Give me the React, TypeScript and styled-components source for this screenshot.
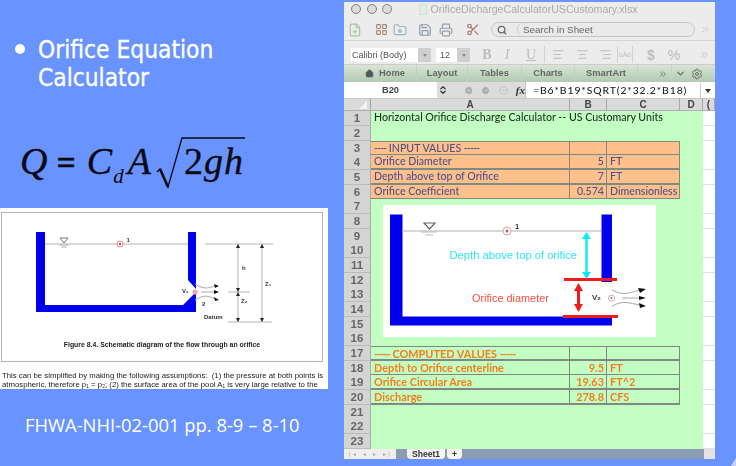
import React from "react";
import styled, { createGlobalStyle } from "styled-components";
import { FilePlus, LayoutGrid, FolderDown, Save, Printer, Scissors, Search, Home, Settings, ChevronDown, ChevronsRight, AlignLeft, AlignCenter, AlignRight, XCircle, CheckCircle, MinusCircle, ChevronsUpDown } from "lucide-react";

const Global = createGlobalStyle`
  html, body { margin: 0; padding: 0; background: #6994ff; }
  * { box-sizing: border-box; }
`;

const Slide = styled.div`
  width: 736px; height: 466px; background: #6994ff; display: flex; overflow: hidden; position: relative;
`;
const LeftColumn = styled.div`
  width: 344px; flex: none; display: flex; flex-direction: column; padding-top: 36px;
`;
const BulletRow = styled.div`
  display: flex; gap: 13px; padding-left: 15px; color: #fff; -webkit-text-stroke: 0.3px #fff;
  font: 400 24.3px/28px "DejaVu Sans Condensed", "DejaVu Sans", sans-serif;
`;
const Dot = styled.span`
  width: 10px; height: 10px; border-radius: 50%; background: #fff; flex: none; margin-top: 8px;
`;
const Equation = styled.div`
  height: 70px; margin-top: 37px; padding-left: 20px; display: flex; align-items: baseline;
  font: italic 38px/64px "Liberation Serif", serif; color: #0a0a12; -webkit-text-stroke: 0.35px #0a0a12;
`;
const EqSign = styled.span`
  font-style: normal; margin: 0 11px 0 9px; font-weight: 700; font-size: 34px;
`;
const EqSub = styled.span`
  font-size: 21px; margin: 0 4px 0 1px; transform: translateY(9px); -webkit-text-stroke: 0;
`;
const Radical = styled.span`
  position: relative; margin-left: 6px; padding-left: 27px; letter-spacing: 1px; display: inline-block;
`;
const RadicalMark = styled.svg`
  position: absolute; left: 0; top: 7px; overflow: visible;
`;
const RadicalDigit = styled.span`
  font-style: normal;
`;
const FigureCard = styled.div`
  width: 328px; height: 181px; margin-top: 9px; background: #fff; padding: 4px 5px 0 1px; filter: blur(0.45px); overflow: hidden; flex: none;
`;
const FigureFrame = styled.div`
  height: 150px; border: 1px solid #b4b4b4; display: flex; flex-direction: column;
`;
const FigureSvg = styled.svg`
  flex: none;
`;
const FigureCaption = styled.div`
  font: 700 6.9px/10px "Liberation Sans", sans-serif; color: #222; text-align: center; margin-top: -5px;
`;
const FigureText = styled.div`
  font: 400 7.78px/9px "Liberation Sans", sans-serif; color: #222; margin-top: 9px; padding-left: 1px; white-space: nowrap;
`;
const Footer = styled.div`
  margin: 25px 0 0 25px; color: #fff; font: 400 18.4px/22px "Open Sans", sans-serif; white-space: nowrap;
`;

const Window = styled.div`
  width: 371px; height: 457px; margin-top: 2px; background: #ececec; display: flex; flex-direction: column;
  overflow: hidden; filter: blur(0.45px); flex: none;
`;
const TitleBar = styled.div`
  height: 20px; display: flex; align-items: center; padding: 0 0 6px 7px; flex: none;
`;
const Light = styled.span`
  width: 10px; height: 10px; border-radius: 50%; border: 1.5px solid #808080; background: #dcdcdc; margin-right: 5.5px; flex: none;
`;
const DocIcon = styled.span`
  width: 8px; height: 11px; background: #dfeee2; border: 1px solid #cfe0d4; margin: 0 4px 0 21px; flex: none;
`;
const TitleText = styled.span`
  font: 400 10.6px/16px "Liberation Sans", sans-serif; color: #aaa; white-space: nowrap;
`;
const Toolbar = styled.div`
  height: 19px; display: flex; align-items: center; padding: 0 0 3px 4px; flex: none; border-bottom: 1px solid #d4d4d4;
`;
const ToolIcon = styled.span<{ $w: number; $c: string; $mr?: number }>`
  width: ${p => p.$w}px; margin-right: ${p => p.$mr ?? 0}px; display: flex; justify-content: center; color: ${p => p.$c}; flex: none;
`;
const SearchPill = styled.div`
  width: 204px; height: 15px; border: 1px solid #c4c4c4; border-radius: 8px; display: flex; align-items: center; padding-left: 5px; gap: 10px; color: #666; flex: none; background: #eaeaea; margin-right: 2px;
`;
const SearchText = styled.span`
  font: 400 9.8px/13px "Liberation Sans", sans-serif; color: #666; flex: 1; border-left: 1px solid #ccc; border-radius: 6px; padding-left: 5px;
`;
const FormatBar = styled.div`
  height: 24px; display: flex; align-items: center; padding: 4px 0 0 7px; flex: none; border-bottom: 1px solid #ccc;
`;
const FieldBox = styled.div<{ $w: number; $pl?: number }>`
  width: ${p => p.$w}px; height: 14px; background: #fff; font: 400 9px/14px "Liberation Sans", sans-serif; color: #555; padding-left: ${p => p.$pl ?? 1}px; flex: none; white-space: nowrap; overflow: hidden;
`;
const Stepper = styled.span<{ $mr?: number }>`
  width: 13px; height: 14px; background: #cfcfcf; margin-right: ${p => p.$mr ?? 0}px; flex: none; display: flex; align-items: center; justify-content: center;
  &::after { content: ""; border: 2.5px solid transparent; border-top: 3px solid #888; margin-top: 3px; }
`;
const FormatGlyph = styled.span<{ $w: number; $serif?: boolean; $it?: boolean; $bold?: boolean; $under?: boolean; $small?: boolean }>`
  width: ${p => p.$w}px; flex: none; color: #bcbcbc;
  font: ${p => (p.$it ? "italic " : "")}${p => (p.$bold ? "700 " : "400 ")}${p => (p.$small ? 7 : 14)}px/20px ${p => (p.$serif ? '"Liberation Serif", serif' : '"Liberation Sans", sans-serif')};
  text-decoration: ${p => (p.$under ? "underline" : "none")};
  display: flex; justify-content: center; align-items: center; height: 20px;
`;
const Separator = styled.span`
  width: 1px; height: 17px; background: #d2d2d2; flex: none;
`;
const Ribbon = styled.div`
  height: 17px; display: flex; align-items: center; flex: none; background: linear-gradient(#d9e5d6, #b2cab1);
`;
const RibbonTab = styled.div<{ $w: number; $pl?: number }>`
  width: ${p => p.$w}px; height: 17px; flex: none; border-right: 1px solid #c4d4c2; display: flex; align-items: center; justify-content: center; gap: 5px;
  padding-left: ${p => p.$pl ?? 0}px;
  font: 700 9.3px/17px "Liberation Sans", sans-serif; color: #5e6a60;
`;
const FormulaBar = styled.div`
  height: 16px; display: flex; flex: none; background: #dcdcdc; align-items: center;
`;
const NameBox = styled.div`
  width: 93px; height: 16px; background: #fff; text-align: center; font: 700 9.3px/16px "Liberation Sans", sans-serif; color: #444; flex: none;
`;
const FxZone = styled.div`
  width: 88px; flex: none; height: 16px; display: flex; align-items: center; color: #aaa; gap: 8px; padding-left: 1px;
`;
const FxStepper = styled.span`
  display: flex; color: #333; width: 10px; margin-right: 8px; flex: none;
`;
const FxLabel = styled.span`
  font: italic 700 11px/16px "Liberation Serif", serif; color: #333;
`;
const FormulaText = styled.div`
  width: 175px; height: 16px; background: #fff; flex: none; padding-left: 7px; font: 500 10.4px/16px "Lato", sans-serif; letter-spacing: 0.9px; color: #222; border-left: 1px solid #bbb; white-space: nowrap;
`;
const FormulaDrop = styled.div`
  flex: 1; height: 16px; background: #fff; border-left: 1px solid #ccc; display: flex; align-items: center; justify-content: center;
  &::after { content: ""; border: 3px solid transparent; border-top: 4px solid #333; margin-top: 4px; }
`;
const SheetRow = styled.div<{ $h: number }>`
  display: grid; grid-template-columns: 27px 199px 37px 73px 23px 1fr; height: ${p => p.$h}px; flex: none;
`;
const ColHead = styled.div`
  background: #dadada; border-right: 1px solid #a8a8a8; border-bottom: 1px solid #b0b0b0; border-top: 1px solid #c8c8c8; text-align: center;
  font: 700 10px/11px "Liberation Sans", sans-serif; color: #444; overflow: hidden;
`;
const Corner = styled(ColHead)`
  position: relative;
  &::after { content: ""; position: absolute; right: 3px; bottom: 1px; border-style: solid; border-width: 0 0 8px 8px; border-color: transparent transparent #f4f4f4 transparent; }
`;
const RowHead = styled.div`
  background: #d4d4d4; border-bottom: 1px solid #bbb; border-right: 1px solid #aaa; text-align: center;
  font: 700 11.5px/14px "Liberation Sans", sans-serif; color: #666;
`;
type CellKind = "plain" | "input" | "output";
const Cell = styled.div<{ $k: CellKind; $r?: boolean; $wide?: boolean }>`
  background: ${p => (p.$k === "input" ? "#ffc08b" : "#c3ffc3")};
  color: ${p => (p.$k === "input" ? "#50508c" : p.$k === "output" ? "#f57c1c" : "#1f3322")};
  font: ${p => (p.$k === "output" ? 700 : 500)} ${p => (p.$k === "output" ? 10.9 : 10.6)}px/13px "Lato", sans-serif;
  padding: 0 2px 0 3px; white-space: nowrap; overflow: hidden;
  text-align: ${p => (p.$r ? "right" : "left")};
  ${p => (p.$wide ? "grid-column: span 4;" : "")}
  ${p => (p.$k !== "plain" ? "border-right: 1px solid #808a80; border-bottom: 2px solid #808a80;" : "")}
`;
const TableTop = styled(Cell)`
  border-top: 1px solid #808a80;
`;
const Dashes = styled.span`
  letter-spacing: -0.9px;
`;
const EdgeCell = styled.div`
  background: #fff; border-bottom: 1px solid #e0e0e0;
`;
const SheetBody = styled.div`
  position: relative; flex: none;
`;
const SheetPicture = styled.svg`
  position: absolute; left: 39px; top: 107px; background: #fff;
`;
const TabBar = styled.div`
  flex: 1; display: flex; background: #8b9db2; align-items: stretch;
`;
const TabNav = styled.div`
  width: 52px; background: #eeeeee; font: 400 6px/10px "Liberation Sans", sans-serif; color: #aaa; letter-spacing: 2.6px; padding-left: 5px; white-space: nowrap; flex: none;
`;
const SheetTab = styled.div<{ $w: number; $ml: number }>`
  width: ${p => p.$w}px; margin-left: ${p => p.$ml}px; background: #f4f4f4; border-radius: 0 0 4px 4px; flex: none; text-align: center;
  font: 700 8.6px/10px "Liberation Sans", sans-serif; color: #333;
`;
const ResizeBox = styled.div`
  width: 12px; margin-left: auto; background: #e4e4e4; border-left: 1px solid #999;
`;
const CornerWedge = styled.svg`
  position: absolute; right: 0; bottom: 0;
`;

const tools: [number, React.ReactNode, string][] = [
  [12, <FilePlus size={14} />, "#a9c4a4"],
  [5, <LayoutGrid size={13} />, "#a08a70"],
  [11, <FolderDown size={14} />, "#9fb2c2"],
  [7, <Save size={14} />, "#8e9aa6"],
  [13, <Printer size={14} />, "#98a2aa"],
  [11, <Scissors size={15} />, "#b0706a"],
];

type Row = { n: number; a?: string; b?: string; c?: string; k?: CellKind; top?: boolean };
const rows: Row[] = [
  { n: 1, a: "Horizontal Orifice Discharge Calculator -- US Customary Units" },
  { n: 2 },
  { n: 3, a: "---- INPUT VALUES -----", k: "input", top: true },
  { n: 4, a: "Orifice Diameter", b: "5", c: "FT", k: "input" },
  { n: 5, a: "Depth above top of Orifice", b: "7", c: "FT", k: "input" },
  { n: 6, a: "Orifice Coefficient", b: "0.574", c: "Dimensionless", k: "input" },
  ...[7, 8, 9, 10, 11, 12, 13, 14, 15, 16].map(n => ({ n })),
  { n: 17, a: "----- COMPUTED VALUES -----", k: "output", top: true },
  { n: 18, a: "Depth to Orifice centerline", b: "9.5", c: "FT", k: "output" },
  { n: 19, a: "Orifice Circular Area", b: "19.63", c: "FT^2", k: "output" },
  { n: 20, a: "Discharge", b: "278.8", c: "CFS", k: "output" },
  { n: 21 }, { n: 22 }, { n: 23 },
];

function withDashes(text?: string) {
  if (!text) return null;
  return text.split(/(-{3,})/).map((part, i) => (i % 2 ? <Dashes key={i}>{part}</Dashes> : part));
}

function FigureDiagram() {
  const g = "#b5b5b5";
  return (
    <FigureSvg width="322" height="132" viewBox="1 212 322 132">
      <path d="M35 231H44V304H182L195 291V311H35Z" fill="#0000ee" />
      <path d="M187 231H195V288L187 279Z" fill="#0000ee" />
      <path d="M44 243H187M204 243H272M227 291H249M227 321H271M237 243V321M261 243V321" stroke={g} strokeWidth="1" fill="none" />
      <path d="M59 237H67L63 242Z" fill="#fff" stroke="#777" strokeWidth="1" />
      <path d="M58 244H68M60 246H66" stroke={g} />
      <circle cx="119" cy="243" r="3" fill="#fff" stroke="#d88" /><circle cx="119" cy="243" r="1.2" fill="#c44" />
      <circle cx="194" cy="291" r="2.6" fill="#f0a8a8" />
      <path d="M194 283C204 289 207 287 214 285M194 299C204 293 207 295 214 298M200 291H214" stroke="#aaa" fill="none" />
      <path d="M213 283L218 285L214 287ZM213 289L218 291L213 293ZM213 296L218 299L214 300Z" fill="#111" />
      <path d="M235 247L237 243L239 247ZM259 247L261 243L263 247ZM235 287L237 291L239 287ZM235 295L237 291L239 295ZM235 317L237 321L239 317ZM259 317L261 321L263 317Z" fill="#222" />
      <g fontFamily="Liberation Sans, sans-serif" fontWeight="700" fontSize="6" fill="#333">
        <text x="125.5" y="241">1</text>
        <text x="181" y="292">V₂</text>
        <text x="201" y="305">2</text>
        <text x="241" y="269">h</text>
        <text x="264" y="285">Z₁</text>
        <text x="240" y="302">Z₂</text>
        <text x="203" y="318">Datum</text>
      </g>
    </FigureSvg>
  );
}

function SheetDiagram() {
  return (
    <SheetPicture width="273" height="132" viewBox="383 205 273 132">
      <path d="M390 214.5H402.5V316.5H601.5V214.5H612V325.5H390Z" fill="#0000ee" />
      <rect x="601" y="282" width="12" height="33" fill="#fff" />
      <path d="M402 231H601" stroke="#b0b0b0" strokeWidth="1.2" />
      <path d="M424 223H435L429.5 229Z" fill="#fff" stroke="#666" strokeWidth="1.2" />
      <path d="M421 232H437M425 235H433" stroke="#bbb" />
      <circle cx="507" cy="231" r="4" fill="#fff" stroke="#caa" /><circle cx="507" cy="231" r="1.5" fill="#c55" />
      <text x="515" y="229" fontFamily="Liberation Sans, sans-serif" fontWeight="700" fontSize="7.5" fill="#333">1</text>
      <path d="M564 279.5H617M563 316.5H618" stroke="#ee1c1c" strokeWidth="3" />
      <path d="M586.5 236V276" stroke="#10e8f4" strokeWidth="2.5" />
      <path d="M582 239L586.5 232L591 239ZM582 272L586.5 279L591 272Z" fill="#10e8f4" />
      <path d="M578.5 287V308" stroke="#f01c1c" strokeWidth="3" />
      <path d="M574 291L578.5 283L583 291ZM574 304L578.5 312L583 304Z" fill="#f01c1c" />
      <g fontFamily="Liberation Sans, sans-serif">
        <text x="449.5" y="259" fill="#2fe4f4" fontSize="11.2">Depth above top of orifice</text>
        <text x="472" y="302" fill="#f4503f" fontSize="10.9">Orifice diameter</text>
      </g>
      <text x="592" y="300" fontFamily="Liberation Sans, sans-serif" fontWeight="700" fontSize="8" fill="#333">V₂</text>
      <circle cx="611.5" cy="298" r="3" fill="#fff" stroke="#caa" /><circle cx="611.5" cy="298" r="1" fill="#c55" />
      <path d="M612 290C624 296 628 293 640 290M612 306C624 300 628 303 640 305M622 298H641" stroke="#aaa" fill="none" />
      <path d="M638 288L646 289L640 293ZM639 296L646 298L639 300ZM639 303L646 306L640 308Z" fill="#111" />
    </SheetPicture>
  );
}

export default function App() {
  return (
    <>
      <Global />
      <Slide>
        <LeftColumn>
          <BulletRow>
            <Dot />
            <div>Orifice Equation<br />Calculator</div>
          </BulletRow>
          <Equation>
            <span>Q</span>
            <EqSign>=</EqSign>
            <span>C</span>
            <EqSub>d</EqSub>
            <span>A</span>
            <Radical>
              <RadicalMark width="90" height="54" viewBox="0 0 90 54">
                <path d="M0 36L3 33L11 51L25 2H88" fill="none" stroke="#0a0a12" strokeWidth="1.3" />
                <path d="M3 33L11 51" fill="none" stroke="#0a0a12" strokeWidth="2.6" />
              </RadicalMark>
              <RadicalDigit>2</RadicalDigit>gh
            </Radical>
          </Equation>
          <FigureCard>
            <FigureFrame>
              <FigureDiagram />
              <FigureCaption>Figure 8.4. Schematic diagram of the flow through an orifice</FigureCaption>
            </FigureFrame>
            <FigureText>
              This can be simplified by making the following assumptions:&nbsp; (1) the pressure at both points is<br />
              atmospheric, therefore p₁ = p₂; (2) the surface area of the pool A₁ is very large relative to the
            </FigureText>
          </FigureCard>
          <Footer>FHWA-NHI-02-001 pp. 8-9 – 8-10</Footer>
        </LeftColumn>
        <Window>
          <TitleBar>
            <Light /><Light /><Light />
            <DocIcon />
            <TitleText>OrificeDichargeCalculatorUSCustomary.xlsx</TitleText>
          </TitleBar>
          <Toolbar>
            {tools.map(([mr, icon, c], i) => (
              <ToolIcon key={i} $w={14} $mr={mr} $c={c}>{icon}</ToolIcon>
            ))}
            <SearchPill>
              <Search size={10} strokeWidth={3} />
              <SearchText>Search in Sheet</SearchText>
            </SearchPill>
            <ToolIcon $w={17} $c="#c8c8c8"><ChevronsRight size={11} /></ToolIcon>
          </Toolbar>
          <FormatBar>
            <FieldBox $w={67}>Calibri (Body)</FieldBox>
            <Stepper $mr={5} />
            <FieldBox $w={21} $pl={4}>12</FieldBox>
            <Stepper $mr={8} />
            <FormatGlyph $w={18} $serif $bold>B</FormatGlyph>
            <FormatGlyph $w={22} $serif $it>I</FormatGlyph>
            <FormatGlyph $w={26} $serif $under>U</FormatGlyph>
            <Separator />
            <FormatGlyph $w={26}><AlignLeft size={13} /></FormatGlyph>
            <FormatGlyph $w={23}><AlignCenter size={13} /></FormatGlyph>
            <FormatGlyph $w={23}><AlignRight size={13} /></FormatGlyph>
            <Separator />
            <FormatGlyph $w={14} $small>oAo</FormatGlyph>
            <Separator />
            <FormatGlyph $w={36} $bold>$</FormatGlyph>
            <FormatGlyph $w={10}>%</FormatGlyph>
            <FormatGlyph $w={50}><ChevronsRight size={11} /></FormatGlyph>
          </FormatBar>
          <Ribbon>
            <RibbonTab $w={73} $pl={10}><Home size={9} fill="#555" />Home</RibbonTab>
            <RibbonTab $w={51}>Layout</RibbonTab>
            <RibbonTab $w={54}>Tables</RibbonTab>
            <RibbonTab $w={53}>Charts</RibbonTab>
            <RibbonTab $w={63}>SmartArt</RibbonTab>
            <RibbonTab $w={34} $pl={16}><ChevronsRight size={10} /></RibbonTab>
            <ToolIcon $w={16} $c="#667066"><ChevronDown size={11} strokeWidth={3} /></ToolIcon>
            <ToolIcon $w={18} $c="#667066"><Settings size={12} /></ToolIcon>
          </Ribbon>
          <FormulaBar>
            <NameBox>B20</NameBox>
            <FxZone>
              <FxStepper><ChevronsUpDown size={10} strokeWidth={3} /></FxStepper>
              <XCircle size={11} fill="#aaa" stroke="#ddd" />
              <CheckCircle size={11} fill="#aaa" stroke="#ddd" />
              <MinusCircle size={11} stroke="#bbb" />
              <FxLabel>fx</FxLabel>
            </FxZone>
            <FormulaText>=B6*B19*SQRT(2*32.2*B18)</FormulaText>
            <FormulaDrop />
          </FormulaBar>
          <SheetBody>
            <SheetRow $h={13}>
              <Corner />
              {["A", "B", "C", "D", "("].map(c => <ColHead key={c}>{c}</ColHead>)}
            </SheetRow>
            {rows.map(r => {
              const k = r.k ?? "plain";
              const C = r.top ? TableTop : Cell;
              const h = r.n % 3 === 0 ? 14 : 15;
              if (r.n === 1) {
                return (
                  <SheetRow key={r.n} $h={h}>
                    <RowHead>{r.n}</RowHead>
                    <Cell $k="plain" $wide>{r.a}</Cell>
                    <EdgeCell />
                  </SheetRow>
                );
              }
              return (
                <SheetRow key={r.n} $h={h}>
                  <RowHead>{r.n}</RowHead>
                  <C $k={k}>{withDashes(r.a)}</C>
                  <C $k={k} $r>{r.b}</C>
                  <C $k={k}>{r.c}</C>
                  <Cell $k="plain" />
                  <EdgeCell />
                </SheetRow>
              );
            })}
            <SheetDiagram />
          </SheetBody>
          <TabBar>
            <TabNav>|◂ ◂ ▸ ▸|</TabNav>
            <SheetTab $w={38} $ml={11}>Sheet1</SheetTab>
            <SheetTab $w={15} $ml={2}>+</SheetTab>
            <ResizeBox />
          </TabBar>
        </Window>
        <CornerWedge width="5" height="8" viewBox="0 0 5 8">
          <path d="M5 0V8H0Z" fill="#c4d4ff" />
        </CornerWedge>
      </Slide>
    </>
  );
}
